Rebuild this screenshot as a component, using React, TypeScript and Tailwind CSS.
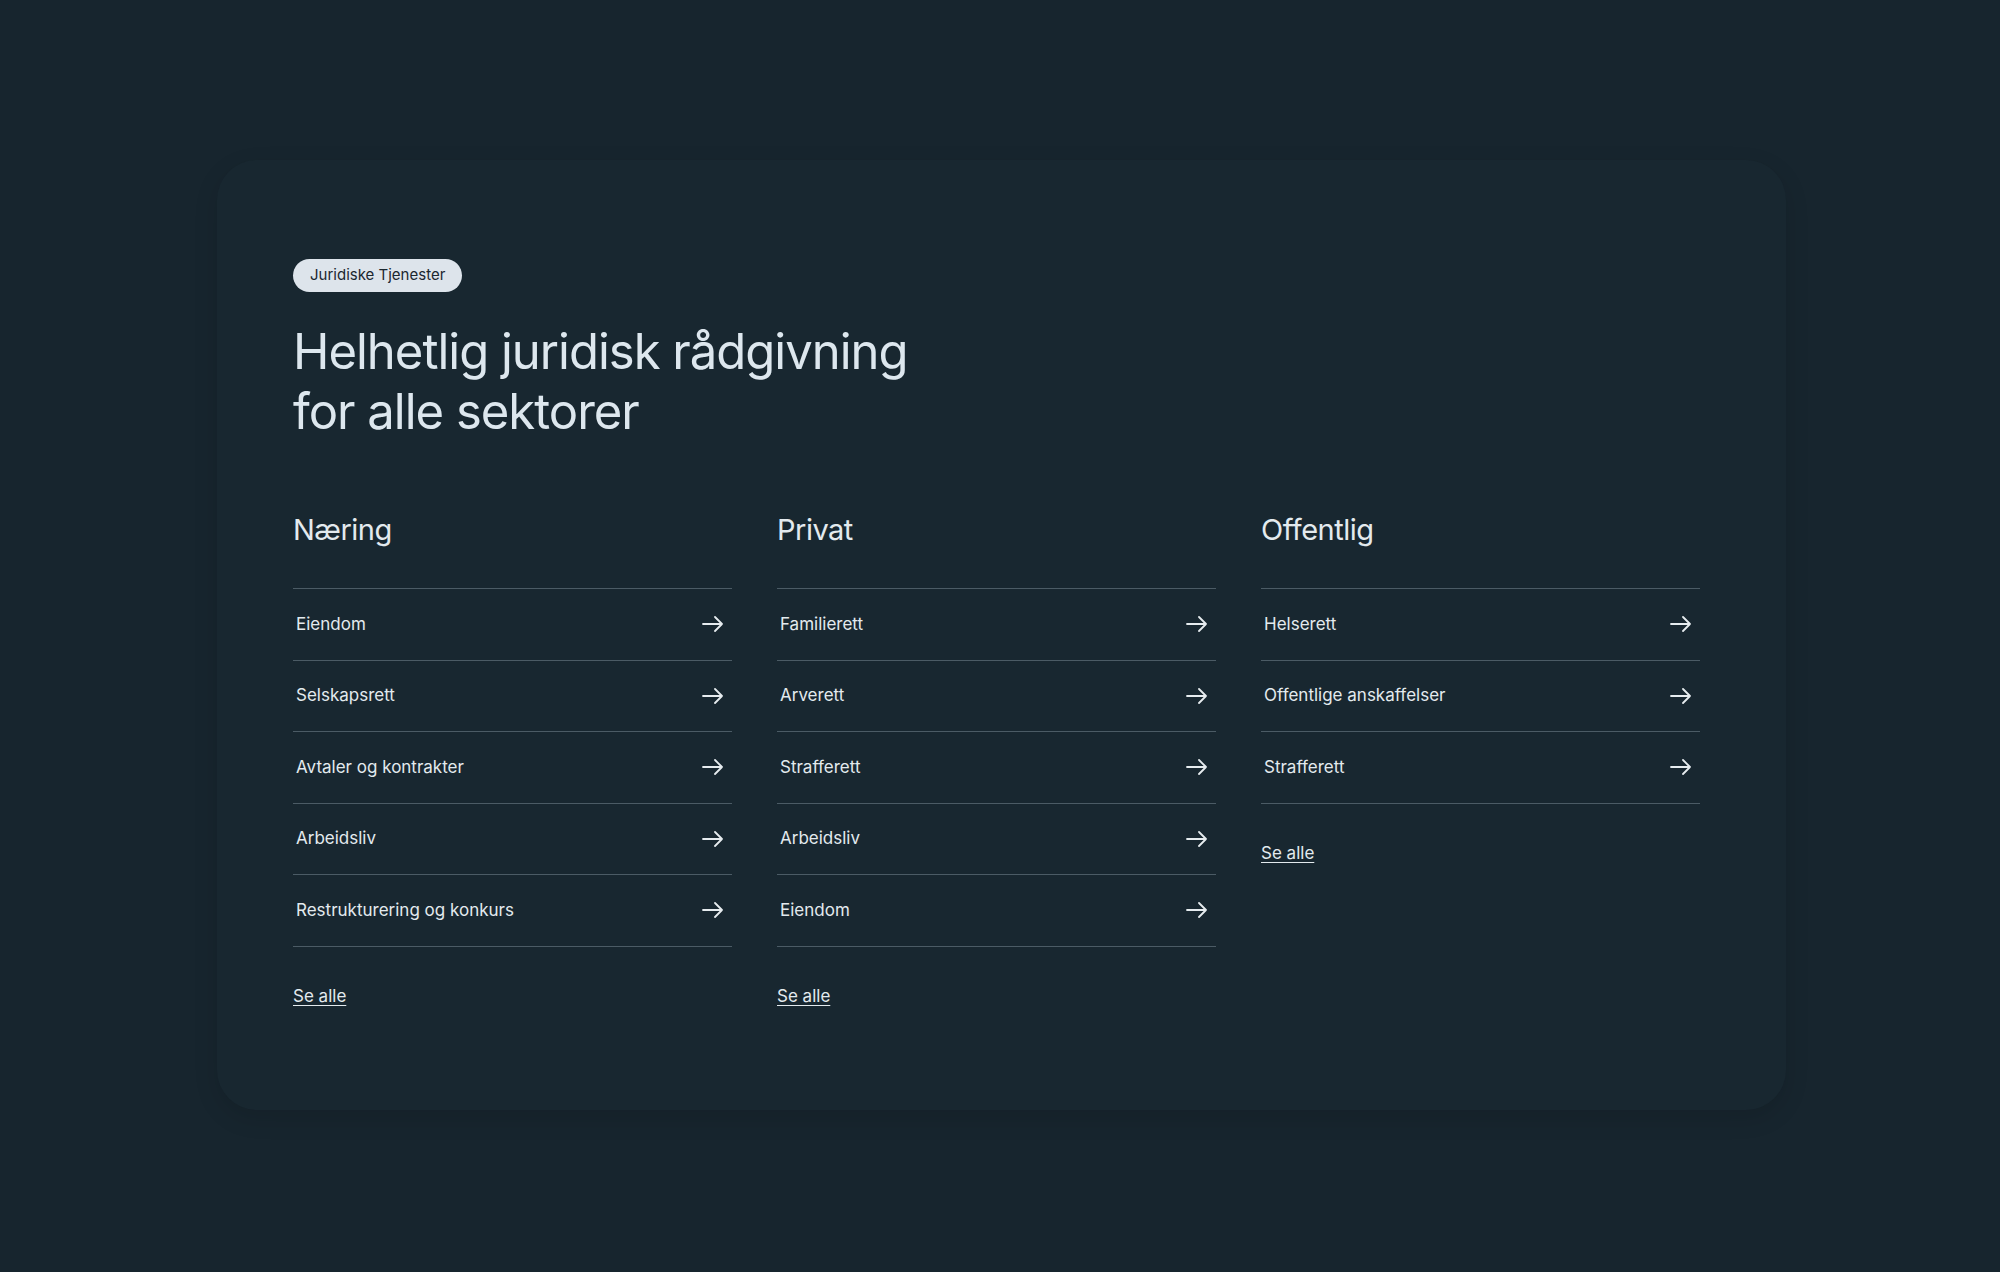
import React from "react";

const cols = [
  { title: "Næring", items: ["Eiendom", "Selskapsrett", "Avtaler og kontrakter", "Arbeidsliv", "Restrukturering og konkurs"] },
  { title: "Privat", items: ["Familierett", "Arverett", "Strafferett", "Arbeidsliv", "Eiendom"] },
  { title: "Offentlig", items: ["Helserett", "Offentlige anskaffelser", "Strafferett"] },
];

function Arrow() {
  return (
    <svg width="22" height="16" viewBox="0 0 22 16" fill="none" stroke="#e6ecef" strokeWidth="1.8" strokeLinecap="round" strokeLinejoin="round">
      <path d="M1 8h19M13 1l7 7-7 7" />
    </svg>
  );
}

export default function App() {
  return (
    <div className="min-h-[1272px] w-full bg-[#17252e] pt-[160px] pl-[217px]" style={{ fontFamily: "Inter, 'Noto Sans', sans-serif" }}>
      <div className="w-[1569px] h-[950px] rounded-[40px] bg-[#182730] shadow-[0_8px_24px_rgba(0,0,0,0.12)] pl-[76px] pt-[99px]">
        <div className="inline-flex items-center h-[33px] px-[17px] rounded-full bg-[#dde4eb] text-[#1b2730] text-[15px]">Juridiske Tjenester</div>
        <h1 className="mt-[30px] text-[49px] leading-[60px] tracking-[-1px] text-[#dde7ee] font-normal">
          Helhetlig juridisk rådgivning
          <br />
          for alle sektorer
        </h1>
        <div className="mt-[68px] flex gap-[45px]">
          {cols.map((c) => (
            <div key={c.title} className="w-[439px]">
              <h2 className="text-[29px] leading-[40px] text-[#e3eaee] tracking-[-0.5px]">{c.title}</h2>
              <div className="mt-[38px] border-t border-[#4b5b65]">
                {c.items.map((it, i) => (
                  <div key={i} className="h-[71.5px] flex items-center justify-between border-b border-[#4b5b65] pl-[3px] pr-[8px]">
                    <span className="text-[17px] text-[#e3eaee]">{it}</span>
                    <Arrow />
                  </div>
                ))}
              </div>
              <a className="inline-block mt-[37px] text-[17px] text-[#e3eaee] underline underline-offset-[3px]">Se alle</a>
            </div>
          ))}
        </div>
      </div>
    </div>
  );
}
